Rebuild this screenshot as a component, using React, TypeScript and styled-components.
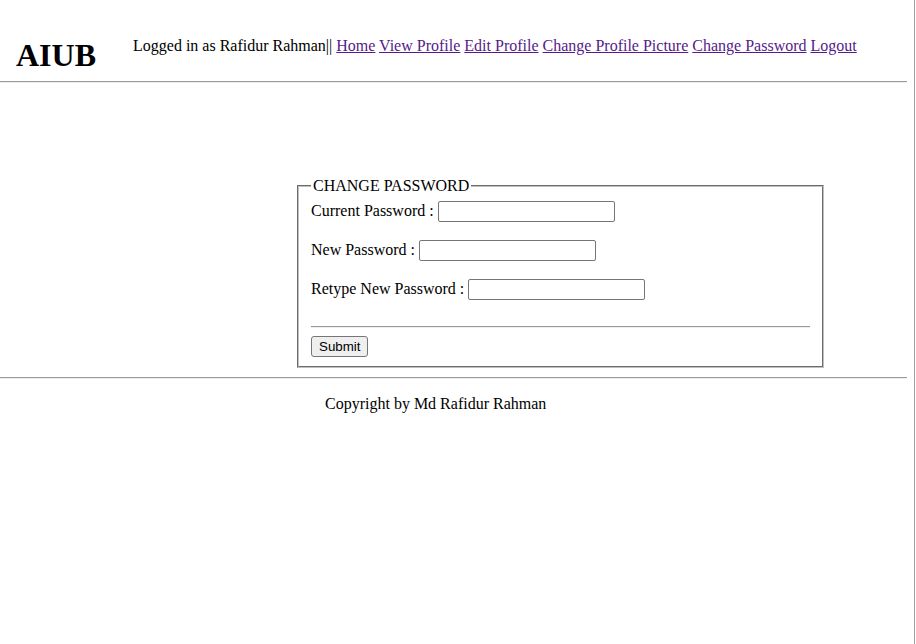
import React from "react";
import styled, { createGlobalStyle } from "styled-components";

const Global = createGlobalStyle`
  html, body { margin: 0; padding: 0; background: #fff; }
  body { font-family: "Liberation Serif", "Times New Roman", serif; font-size: 16px; color: #000; }
`;

const Frame = styled.div`
  box-sizing: border-box;
  width: 915px;
  min-height: 100vh;
  border-right: 1px solid #a0a0a0;
`;

const Page = styled.div`
  width: 907px;
`;

const Header = styled.header`
  display: flex;
  align-items: flex-start;
  height: 81px;
  box-sizing: border-box;
  padding: 37px 0 0 16px;
`;

const Brand = styled.h1`
  flex: 0 0 117px;
  margin: 0;
  font-size: 32px;
  font-weight: bold;
  line-height: 36px;
`;

const Nav = styled.div`
  line-height: 18px;
  white-space: nowrap;
`;

const NavLink = styled.a`
  color: #551a8b;
  text-decoration: underline;
`;

const Rule = styled.hr`
  margin: 0;
  border: 0;
  border-top: 1px solid #9a9a9a;
  border-bottom: 1px solid #eeeeee;
  height: 0;
`;

const Main = styled.main`
  padding: 94px 0 9px 297px;
`;

const Fieldset = styled.fieldset`
  box-sizing: border-box;
  width: 527px;
  margin: 0;
  padding: 6px 12px 9px;
  border: 2px groove #c0c0c0;
`;

const Legend = styled.legend`
  padding: 0 2px;
  line-height: 18px;
`;

const Rows = styled.div`
  display: flex;
  flex-direction: column;
  gap: 18px;
`;

const Row = styled.label`
  display: flex;
  align-items: center;
  gap: 4px;
  height: 21px;
  line-height: 18px;
`;

const LabelText = styled.span`
  padding-bottom: 2px;
`;

const Input = styled.input`
  box-sizing: border-box;
  width: 177px;
  height: 21px;
  border: 1px solid #767676;
  border-radius: 2px;
  padding: 1px 2px;
  font: 13.33px Arial, "Liberation Sans", sans-serif;
`;

const InnerRule = styled.hr`
  margin: 26px 0 8px;
  border: 0;
  border-top: 1px solid #9a9a9a;
  border-bottom: 1px solid #eeeeee;
  height: 0;
`;

const Button = styled.button`
  box-sizing: border-box;
  height: 21px;
  padding: 1px 7px;
  border: 1px solid #767676;
  border-radius: 3px;
  background: #efefef;
  color: #000;
  font: 13.33px Arial, "Liberation Sans", sans-serif;
  display: block;
`;

const Footer = styled.footer`
  padding: 16px 0 0 325px;
  line-height: 18px;
`;

const links = [
  "Home",
  "View Profile",
  "Edit Profile",
  "Change Profile Picture",
  "Change Password",
  "Logout",
];

const fields = ["Current Password :", "New Password :", "Retype New Password :"];

export default function App() {
  return (
    <>
      <Global />
      <Frame>
        <Page>
          <Header>
            <Brand>AIUB</Brand>
            <Nav>
              Logged in as Rafidur Rahman||
              {links.map((l) => (
                <React.Fragment key={l}>
                  {" "}
                  <NavLink href="#">{l}</NavLink>
                </React.Fragment>
              ))}
            </Nav>
          </Header>
          <Rule />
          <Main>
            <Fieldset>
              <Legend>CHANGE PASSWORD</Legend>
              <Rows>
                {fields.map((f) => (
                  <Row key={f}>
                    <LabelText>{f}</LabelText>
                    <Input type="password" />
                  </Row>
                ))}
              </Rows>
              <InnerRule />
              <Button type="button">Submit</Button>
            </Fieldset>
          </Main>
          <Rule />
          <Footer>Copyright by Md Rafidur Rahman</Footer>
        </Page>
      </Frame>
    </>
  );
}
